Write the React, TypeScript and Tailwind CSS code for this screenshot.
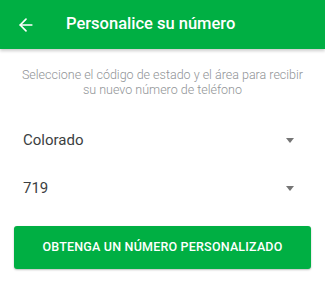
import { ArrowLeft } from "lucide-react";

function Dropdown({ value }: { value: string }) {
  return (
    <div className="flex h-[48px] items-center justify-between pl-[23px] pr-[31px]">
      <span className="text-[15px] text-[#3c3f42]">{value}</span>
      <span className="h-0 w-0 border-x-[4.5px] border-t-[5px] border-x-transparent border-t-[#757575]" />
    </div>
  );
}

export default function App() {
  return (
    <div
      className="h-[293px] w-[325px] bg-white"
      style={{ fontFamily: "Roboto, 'Liberation Sans', sans-serif" }}
    >
      <div className="relative z-10 flex h-[49px] items-center bg-[#00af43] shadow-[0_2px_3px_rgba(0,0,0,0.2)]">
        <ArrowLeft className="ml-[16px] h-[20px] w-[20px] text-white" strokeWidth={2} />
        <span className="ml-[30px] text-[16.5px] font-medium text-white">Personalice su número</span>
      </div>

      <p className="mt-[18px] px-[16px] text-center text-[12.5px] font-light leading-[15px] text-[#909396]">
        Seleccione el código de estado y el área para recibir
        <br />
        su nuevo número de teléfono
      </p>

      <div className="mt-[19px] flex flex-col">
        <Dropdown value="Colorado" />
        <Dropdown value="719" />
      </div>

      <div className="mt-[14px] px-[14px]">
        <button className="flex h-[43px] w-full items-center justify-center rounded-[3px] bg-[#00af43] text-[12.5px] font-medium tracking-[0.2px] text-white shadow-[0_1px_2px_rgba(0,0,0,0.25)]">
          OBTENGA UN NÚMERO PERSONALIZADO
        </button>
      </div>
    </div>
  );
}
